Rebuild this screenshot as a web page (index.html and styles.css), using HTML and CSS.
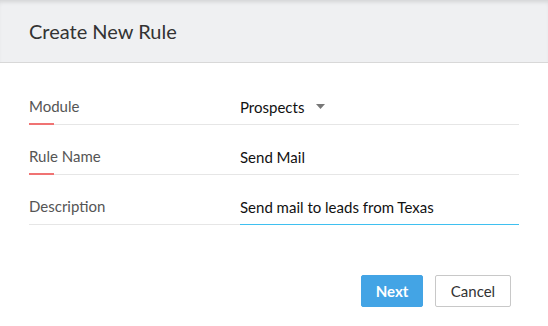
FILE: index.html
```html
<!DOCTYPE html>
<html>
<head>
<meta charset="utf-8">
<link rel="stylesheet" href="styles.css">
</head>
<body>
<div class="dialog">
  <div class="header"><h1 class="title">Create New Rule</h1></div>
  <div class="form">
    <div class="row">
      <div class="label required">Module</div>
      <div class="value">
        <span>Prospects</span>
        <svg class="caret" width="9" height="5" viewBox="0 0 9 5"><path d="M0 0H9L4.5 5Z" fill="#777"/></svg>
      </div>
    </div>
    <div class="row">
      <div class="label required">Rule Name</div>
      <div class="value">Send Mail</div>
    </div>
    <div class="row">
      <div class="label">Description</div>
      <div class="value focused">Send mail to leads from Texas</div>
    </div>
  </div>
  <div class="actions">
    <button class="btn primary">Next</button>
    <button class="btn secondary">Cancel</button>
  </div>
</div>
</body>
</html>
```
FILE: styles.css
```css
html, body {
  margin: 0;
  padding: 0;
  background: #fff;
}
body {
  font-family: Lato, "Open Sans", sans-serif;
  color: #222;
  width: 548px;
  height: 326px;
  overflow: hidden;
}
.header {
  height: 62px;
  background: #eff0f2;
  border-bottom: 1px solid #d8d8d8;
  box-shadow: inset 0 4px 4px -2px rgba(0,0,0,0.12);
  display: flex;
  align-items: center;
  padding-left: 29px;
}
.title {
  margin: 0;
  font-size: 20px;
  font-weight: 400;
  color: #333;
  padding-bottom: 1px;
}
.form {
  padding: 12px 29px 0 29px;
}
.row {
  display: flex;
  height: 49px;
  border-bottom: 1px solid #e6e6e6;
  position: relative;
}
.label {
  width: 211px;
  font-size: 15px;
  color: #555;
  padding-bottom: 9px;
  position: relative;
  display: flex;
  align-items: flex-end;
}
.label.required::after {
  content: "";
  position: absolute;
  left: 0;
  bottom: -1px;
  width: 25px;
  height: 2px;
  background: #f07373;
}
.value {
  flex: 1;
  font-size: 15px;
  color: #111;
  padding-bottom: 8px;
  display: flex;
  gap: 12px;
  align-items: flex-end;
  position: relative;
}
.value .caret {
  margin-bottom: 7px;
}
.value.focused::after {
  content: "";
  position: absolute;
  left: 0;
  right: 0;
  bottom: -1px;
  height: 1px;
  background: #3fc0f0;
  z-index: 1;
}
.actions {
  display: flex;
  justify-content: flex-end;
  gap: 12px;
  padding: 50px 37px 0 0;
}
.btn {
  height: 32px;
  font-family: Lato, "Open Sans", sans-serif;
  font-size: 15px;
  border-radius: 2px;
  cursor: pointer;
}
.primary {
  width: 62px;
  background: #43a4e5;
  border: 1px solid #43a4e5;
  color: #fff;
  font-weight: 700;
}
.secondary {
  width: 76px;
  background: #fff;
  border: 1px solid #c8c8c8;
  color: #333;
}
```
